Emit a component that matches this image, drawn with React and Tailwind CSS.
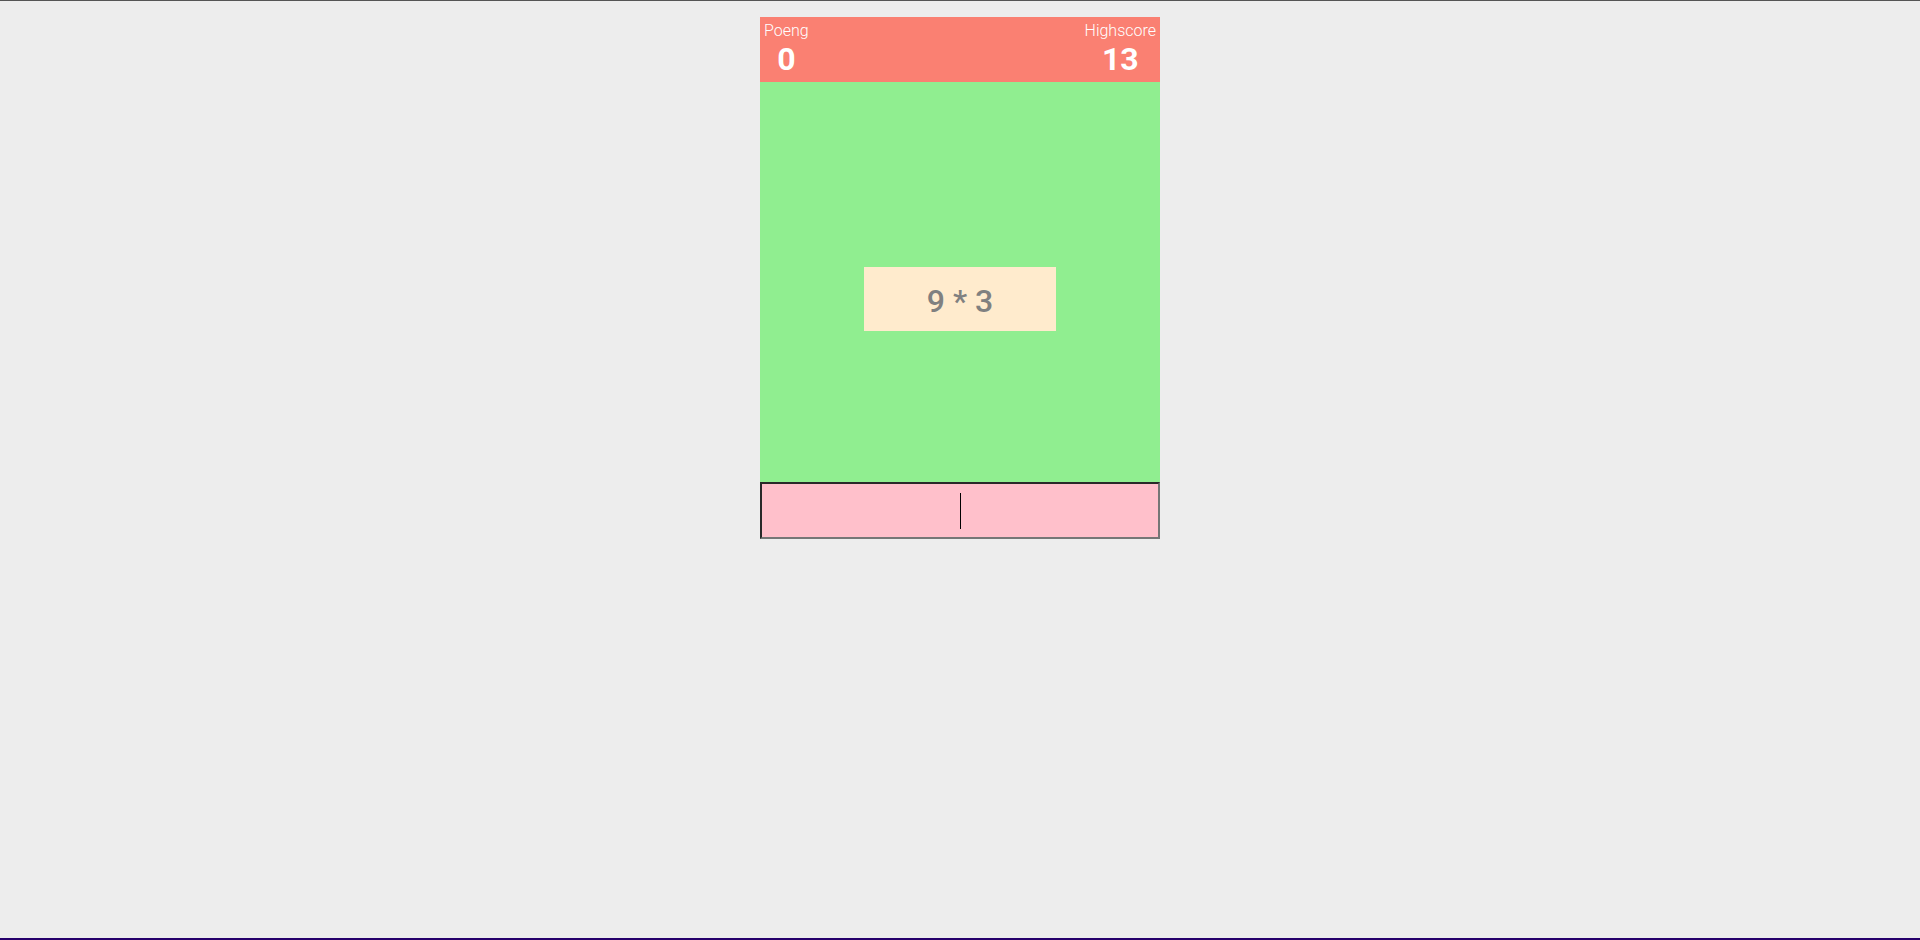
import React, { useState } from 'react';

export default function App() {
  const [answer, setAnswer] = useState('');
  const score = 0;
  const highscore = 13;

  return (
    <div className="h-screen flex flex-col bg-[#ededed] font-['Roboto',sans-serif] border-t border-[#555555]">
      {/* Game card */}
      <div className="w-[400px] mx-auto mt-[16px] flex flex-col">
        <div className="bg-[#fa8072] text-white flex justify-between p-[4px] leading-[normal]">
          <div className="text-center">
            <div className="text-[16px] font-light">Poeng</div>
            <div className="text-[32px] font-bold">{score}</div>
          </div>
          <div className="text-center">
            <div className="text-[16px] font-light">Highscore</div>
            <div className="text-[32px] font-bold">{highscore}</div>
          </div>
        </div>

        <div className="bg-[#90ee90] h-[400px] flex justify-center items-start pt-[185px]">
          <div className="w-[192px] h-[64px] bg-[#ffebcd] text-[#808080] text-[32px] font-medium leading-[normal] text-center pt-[15px]">
            9 * 3
          </div>
        </div>

        <div className="relative">
          <input
            autoFocus
            value={answer}
            onChange={(e) => setAnswer(e.target.value)}
            className="w-[400px] h-[57px] bg-[#ffc0cb] text-center text-[32px] outline-none caret-transparent border-2 border-t-[#292929] border-l-[#292929] border-b-[#767676] border-r-[#767676]"
          />
          {/* caret */}
          {answer === '' && (
            <div className="absolute left-[200px] top-[11px] w-[1px] h-[36px] bg-black pointer-events-none" />
          )}
        </div>
      </div>

      <div className="flex-1" />
      <div className="h-[2px] bg-[#26006b]" />
    </div>
  );
}
